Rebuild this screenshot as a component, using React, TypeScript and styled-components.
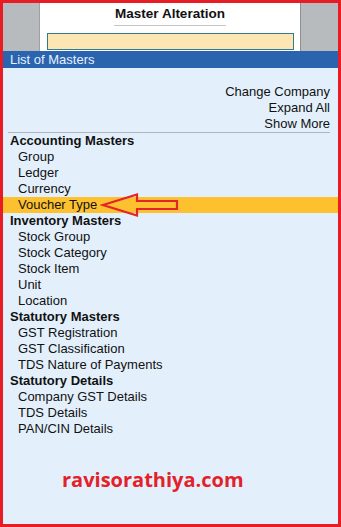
import styled, { createGlobalStyle } from "styled-components";

const GlobalStyle = createGlobalStyle`
  body {
    margin: 0;
    font-family: "Liberation Sans", Arial, sans-serif;
  }
`;

interface Section {
  title: string;
  items: string[];
}

const sections: Section[] = [
  { title: "Accounting Masters", items: ["Group", "Ledger", "Currency", "Voucher Type"] },
  { title: "Inventory Masters", items: ["Stock Group", "Stock Category", "Stock Item", "Unit", "Location"] },
  { title: "Statutory Masters", items: ["GST Registration", "GST Classification", "TDS Nature of Payments"] },
  { title: "Statutory Details", items: ["Company GST Details", "TDS Details", "PAN/CIN Details"] },
];

const selected = "Voucher Type";

const App = () => {
  return (
    <>
      <GlobalStyle />
      <Frame>
        <Header>
          <SidePanel />
          <CenterPanel>
            <Title>Master Alteration</Title>
            <SearchBox />
          </CenterPanel>
          <SidePanel right />
        </Header>
        <TitleBar>List of Masters</TitleBar>
        <Links>
          <LinkText>Change Company</LinkText>
          <LinkText>Expand All</LinkText>
          <LinkText>Show More</LinkText>
        </Links>
        <List>
          {sections.map(section => (
            <div key={section.title}>
              <SectionTitle>{section.title}</SectionTitle>
              {section.items.map(item => (
                <Item key={item} active={item === selected}>
                  {item}
                  {item === selected && (
                    <Arrow width="80" height="26" viewBox="0 0 80 26">
                      <polygon
                        points="3,13 37,2.5 37,9 77,9 77,17 37,17 37,23.5"
                        fill="none"
                        stroke="#e3242b"
                        strokeWidth="2.2"
                        strokeLinejoin="miter"
                      />
                    </Arrow>
                  )}
                </Item>
              ))}
            </div>
          ))}
        </List>
        <Watermark>ravisorathiya.com</Watermark>
      </Frame>
    </>
  );
};

export default App;

const Frame = styled.div`
  width: 341px;
  height: 527px;
  box-sizing: border-box;
  border: 3px solid #e81c25;
  background: #e3f0fc;
  display: flex;
  flex-direction: column;
  color: #111;
`;

const Header = styled.div`
  display: grid;
  grid-template-columns: 37px 1fr 38px;
  height: 48px;
`;

const SidePanel = styled.div<{ right?: boolean }>`
  background: #b8bbbe;
  border-left: ${({ right }) => (right ? "1px solid #8c9094" : "none")};
  border-right: ${({ right }) => (right ? "none" : "1px solid #9da1a5")};
`;

const CenterPanel = styled.div`
  background: #ffffff;
  display: flex;
  flex-direction: column;
  align-items: center;
  padding-top: 4px;
  box-sizing: border-box;
`;

const Title = styled.div`
  font-size: 13.5px;
  font-weight: bold;
  line-height: 14px;
  padding: 0 1px 4px;
  border-bottom: 1px solid #c4c4c4;
`;

const SearchBox = styled.div`
  margin-top: 7px;
  width: 247px;
  height: 17px;
  box-sizing: border-box;
  background: #fde6b4;
  border: 1px solid #2f7c8c;
`;

const TitleBar = styled.div`
  height: 17px;
  background: #2b64ae;
  color: #e6f0ff;
  font-size: 13px;
  line-height: 17px;
  padding-left: 7px;
`;

const Links = styled.div`
  margin: 16px 8px 0 5px;
  border-bottom: 1px solid #b0b6bc;
  display: flex;
  flex-direction: column;
  align-items: flex-end;
`;

const LinkText = styled.div`
  font-size: 13px;
  line-height: 16px;
`;

const List = styled.div`
  display: flex;
  flex-direction: column;
`;

const SectionTitle = styled.div`
  font-size: 13px;
  font-weight: bold;
  line-height: 16px;
  padding-left: 7px;
`;

const Item = styled.div<{ active: boolean }>`
  position: relative;
  font-size: 13px;
  line-height: 16px;
  padding-left: 15px;
  background: ${({ active }) => (active ? "#fdc130" : "transparent")};
`;

const Arrow = styled.svg`
  position: absolute;
  left: 97px;
  top: -5px;
`;

const Watermark = styled.div`
  margin-top: 31px;
  padding-left: 59px;
  font-family: "Open Sans", "Noto Sans", sans-serif;
  font-size: 20px;
  font-weight: bold;
  line-height: 24px;
  color: #e32129;
`;
